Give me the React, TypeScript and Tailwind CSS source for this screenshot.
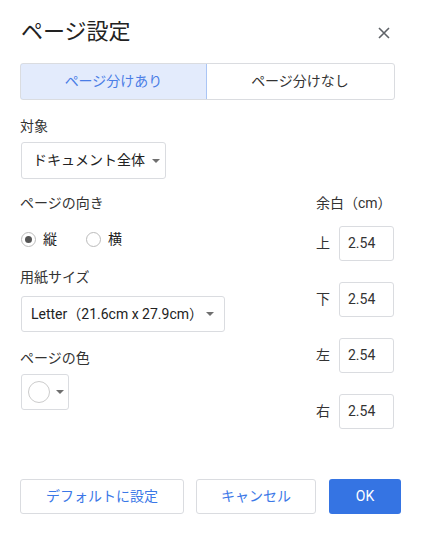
import React from 'react';

const font = { fontFamily: "Roboto, 'Noto Sans CJK JP', sans-serif" };

function Caret() {
  return <span className="inline-block w-0 h-0 border-l-[4px] border-r-[4px] border-t-[4px] border-l-transparent border-r-transparent border-t-[#6f6f6f]" />;
}

function MarginInput({ label }: { label: string }) {
  return (
    <div className="flex items-center gap-[9px]">
      <span className="text-[14px] text-[#333] w-[14px]">{label}</span>
      <div className="w-[55px] h-[35px] border border-[#dadce0] rounded-[3px] flex items-center pl-[8px] text-[14px] text-[#333]">
        2.54
      </div>
    </div>
  );
}

export default function App() {
  return (
    <div className="w-[422px] h-[535px] bg-white relative" style={font}>
      <div className="pl-[20px] pr-[27px] pt-[18px]">
        <div className="flex items-center justify-between">
          <h1 className="text-[22px] leading-[28px] text-[#222] pl-[1px]">ページ設定</h1>
          <svg width="12" height="12" viewBox="0 0 12 12" className="mr-[5px] mt-[2px]">
            <path d="M1 1L11 11M11 1L1 11" stroke="#5f6368" strokeWidth="1.6" />
          </svg>
        </div>

        <div className="mt-[17px] flex h-[37px] rounded-[3px] border border-[#dadce0] overflow-hidden text-[14px]">
          <div className="w-[187px] flex items-center justify-center bg-[#e3ebfc] border border-[#aac5f5] -m-px rounded-l-[3px] text-[#4a7de6]">
            ページ分けあり
          </div>
          <div className="flex-1 flex items-center justify-center text-[#333]">ページ分けなし</div>
        </div>

        <div className="mt-[16px] text-[14px] leading-[20px] text-[#333]">対象</div>
        <div className="mt-[6px] ml-[1px] inline-flex items-center gap-[7px] h-[37px] w-[145px] border border-[#dadce0] rounded-[3px] pl-[11px] text-[14px] text-[#222]">
          ドキュメント全体
          <Caret />
        </div>

        <div className="flex justify-between mt-[14px]">
          <div className="flex flex-col">
            <div className="text-[14px] leading-[20px] text-[#333]">ページの向き</div>
            <div className="mt-[16px] flex items-center h-[20px] text-[14px] text-[#222]">
              <span className="ml-[1px] w-[15px] h-[15px] rounded-full border border-[#bbb] flex items-center justify-center">
                <span className="w-[7px] h-[7px] rounded-full bg-[#555]" />
              </span>
              <span className="ml-[7px]">縦</span>
              <span className="ml-[29px] w-[15px] h-[15px] rounded-full border border-[#bbb]" />
              <span className="ml-[7px]">横</span>
            </div>
            <div className="mt-[18px] text-[14px] leading-[20px] text-[#333]">用紙サイズ</div>
            <div className="mt-[9px] ml-[1px] flex items-center justify-between h-[36px] w-[204px] border border-[#dadce0] rounded-[3px] pl-[9px] pr-[10px] text-[14px] text-[#222]">
              <span>Letter（21.6cm x 27.9cm）</span>
              <Caret />
            </div>
            <div className="mt-[16px] text-[14px] leading-[20px] text-[#333]">ページの色</div>
            <div className="mt-[6px] ml-[1px] flex items-center gap-[6px] h-[36px] w-[48px] border border-[#dadce0] rounded-[3px] pl-[6px]">
              <span className="w-[22px] h-[22px] rounded-full border border-[#ccc]" />
              <Caret />
            </div>
          </div>

          <div className="flex flex-col">
            <div className="text-[14px] leading-[20px] text-[#333] w-[79px]">余白（cm）</div>
            <div className="mt-[13px] flex flex-col gap-[21px]">
              <MarginInput label="上" />
              <MarginInput label="下" />
              <MarginInput label="左" />
              <MarginInput label="右" />
            </div>
          </div>
        </div>
      </div>

      <div className="absolute left-[20px] top-[479px] flex gap-[12px] text-[14px]">
        <button className="w-[164px] h-[35px] border border-[#dadce0] rounded-[3px] text-[#3b78e7]">デフォルトに設定</button>
        <button className="w-[120px] h-[35px] border border-[#dadce0] rounded-[3px] text-[#3b78e7]">キャンセル</button>
        <button className="w-[72px] h-[35px] rounded-[3px] bg-[#3574e3] text-white ml-[1px]">OK</button>
      </div>
    </div>
  );
}
